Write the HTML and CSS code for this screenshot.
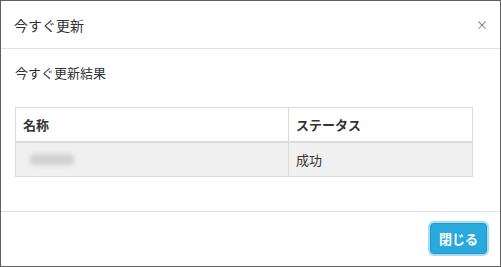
FILE: index.html
```html
<!DOCTYPE html>
<html lang="ja">
<head>
<meta charset="utf-8">
<link rel="stylesheet" href="styles.css">
</head>
<body>
<div class="modal">
  <div class="modal-header">
    <h4 class="modal-title">今すぐ更新</h4>
    <span class="close">×</span>
  </div>
  <div class="modal-body">
    <p class="result-label">今すぐ更新結果</p>
    <table class="result-table">
      <thead>
        <tr><th class="col-name">名称</th><th>ステータス</th></tr>
      </thead>
      <tbody>
        <tr><td><span class="blurred"></span></td><td>成功</td></tr>
      </tbody>
    </table>
  </div>
  <div class="modal-footer">
    <button class="btn-close">閉じる</button>
  </div>
</div>
</body>
</html>
```

FILE: styles.css
```css
html, body {
  margin: 0;
  padding: 0;
  width: 501px;
  height: 267px;
  overflow: hidden;
  background: #5f5f5f;
}
body {
  font-family: "Noto Sans CJK JP", "Noto Sans", sans-serif;
  color: #333;
  font-size: 13px;
}
.modal {
  box-sizing: border-box;
  margin: 1px 1px 0 1px;
  width: 499px;
  height: 265px;
  background: #fff;
  display: flex;
  flex-direction: column;
}
.modal-header {
  height: 47px;
  border-bottom: 1px solid #e1e1e1;
  display: flex;
  align-items: center;
  justify-content: space-between;
  padding: 0 12px 0 13px;
}
.modal-title {
  margin: 0;
  font-size: 14px;
  font-weight: normal;
  color: #333;
}
.close {
  font-size: 12px;
  color: #777;
  line-height: 1;
}
.modal-body {
  padding: 14px 26px 0 14px;
  height: 148px;
}
.result-label {
  margin: 0 0 24px 0;
  font-size: 13px;
  line-height: 20px;
}
.result-table {
  width: 458px;
  border-collapse: collapse;
}
.result-table th,
.result-table td {
  border: 1px solid #dcdcdc;
  text-align: left;
  padding: 0 7px;
  font-size: 13px;
}
.result-table th {
  height: 33px;
  font-weight: bold;
  border-bottom: 2px solid #dcdcdc;
}
.result-table td {
  height: 33px;
  background: #f0f0f0;
}
.col-name {
  width: 258px;
}
.blurred {
  display: block;
  background: #d2d2d2;
  filter: blur(2px);
  border-radius: 4px;
  height: 11px;
  width: 44px;
  margin-left: 7px;
}
.modal-footer {
  border-top: 1px solid #e1e1e1;
  flex: 1;
  display: flex;
  justify-content: flex-end;
  align-items: flex-start;
  padding: 11px 13px 0 0;
}
.btn-close {
  width: 57px;
  height: 31px;
  border: 1px solid #1f9bd0;
  border-radius: 4px;
  background: #2aa9dc;
  color: #fff;
  font-family: "Noto Sans CJK JP", sans-serif;
  font-size: 13px;
  font-weight: bold;
  box-shadow: 0 0 0 2px #a9dcf1;
  padding: 0;
}
```
